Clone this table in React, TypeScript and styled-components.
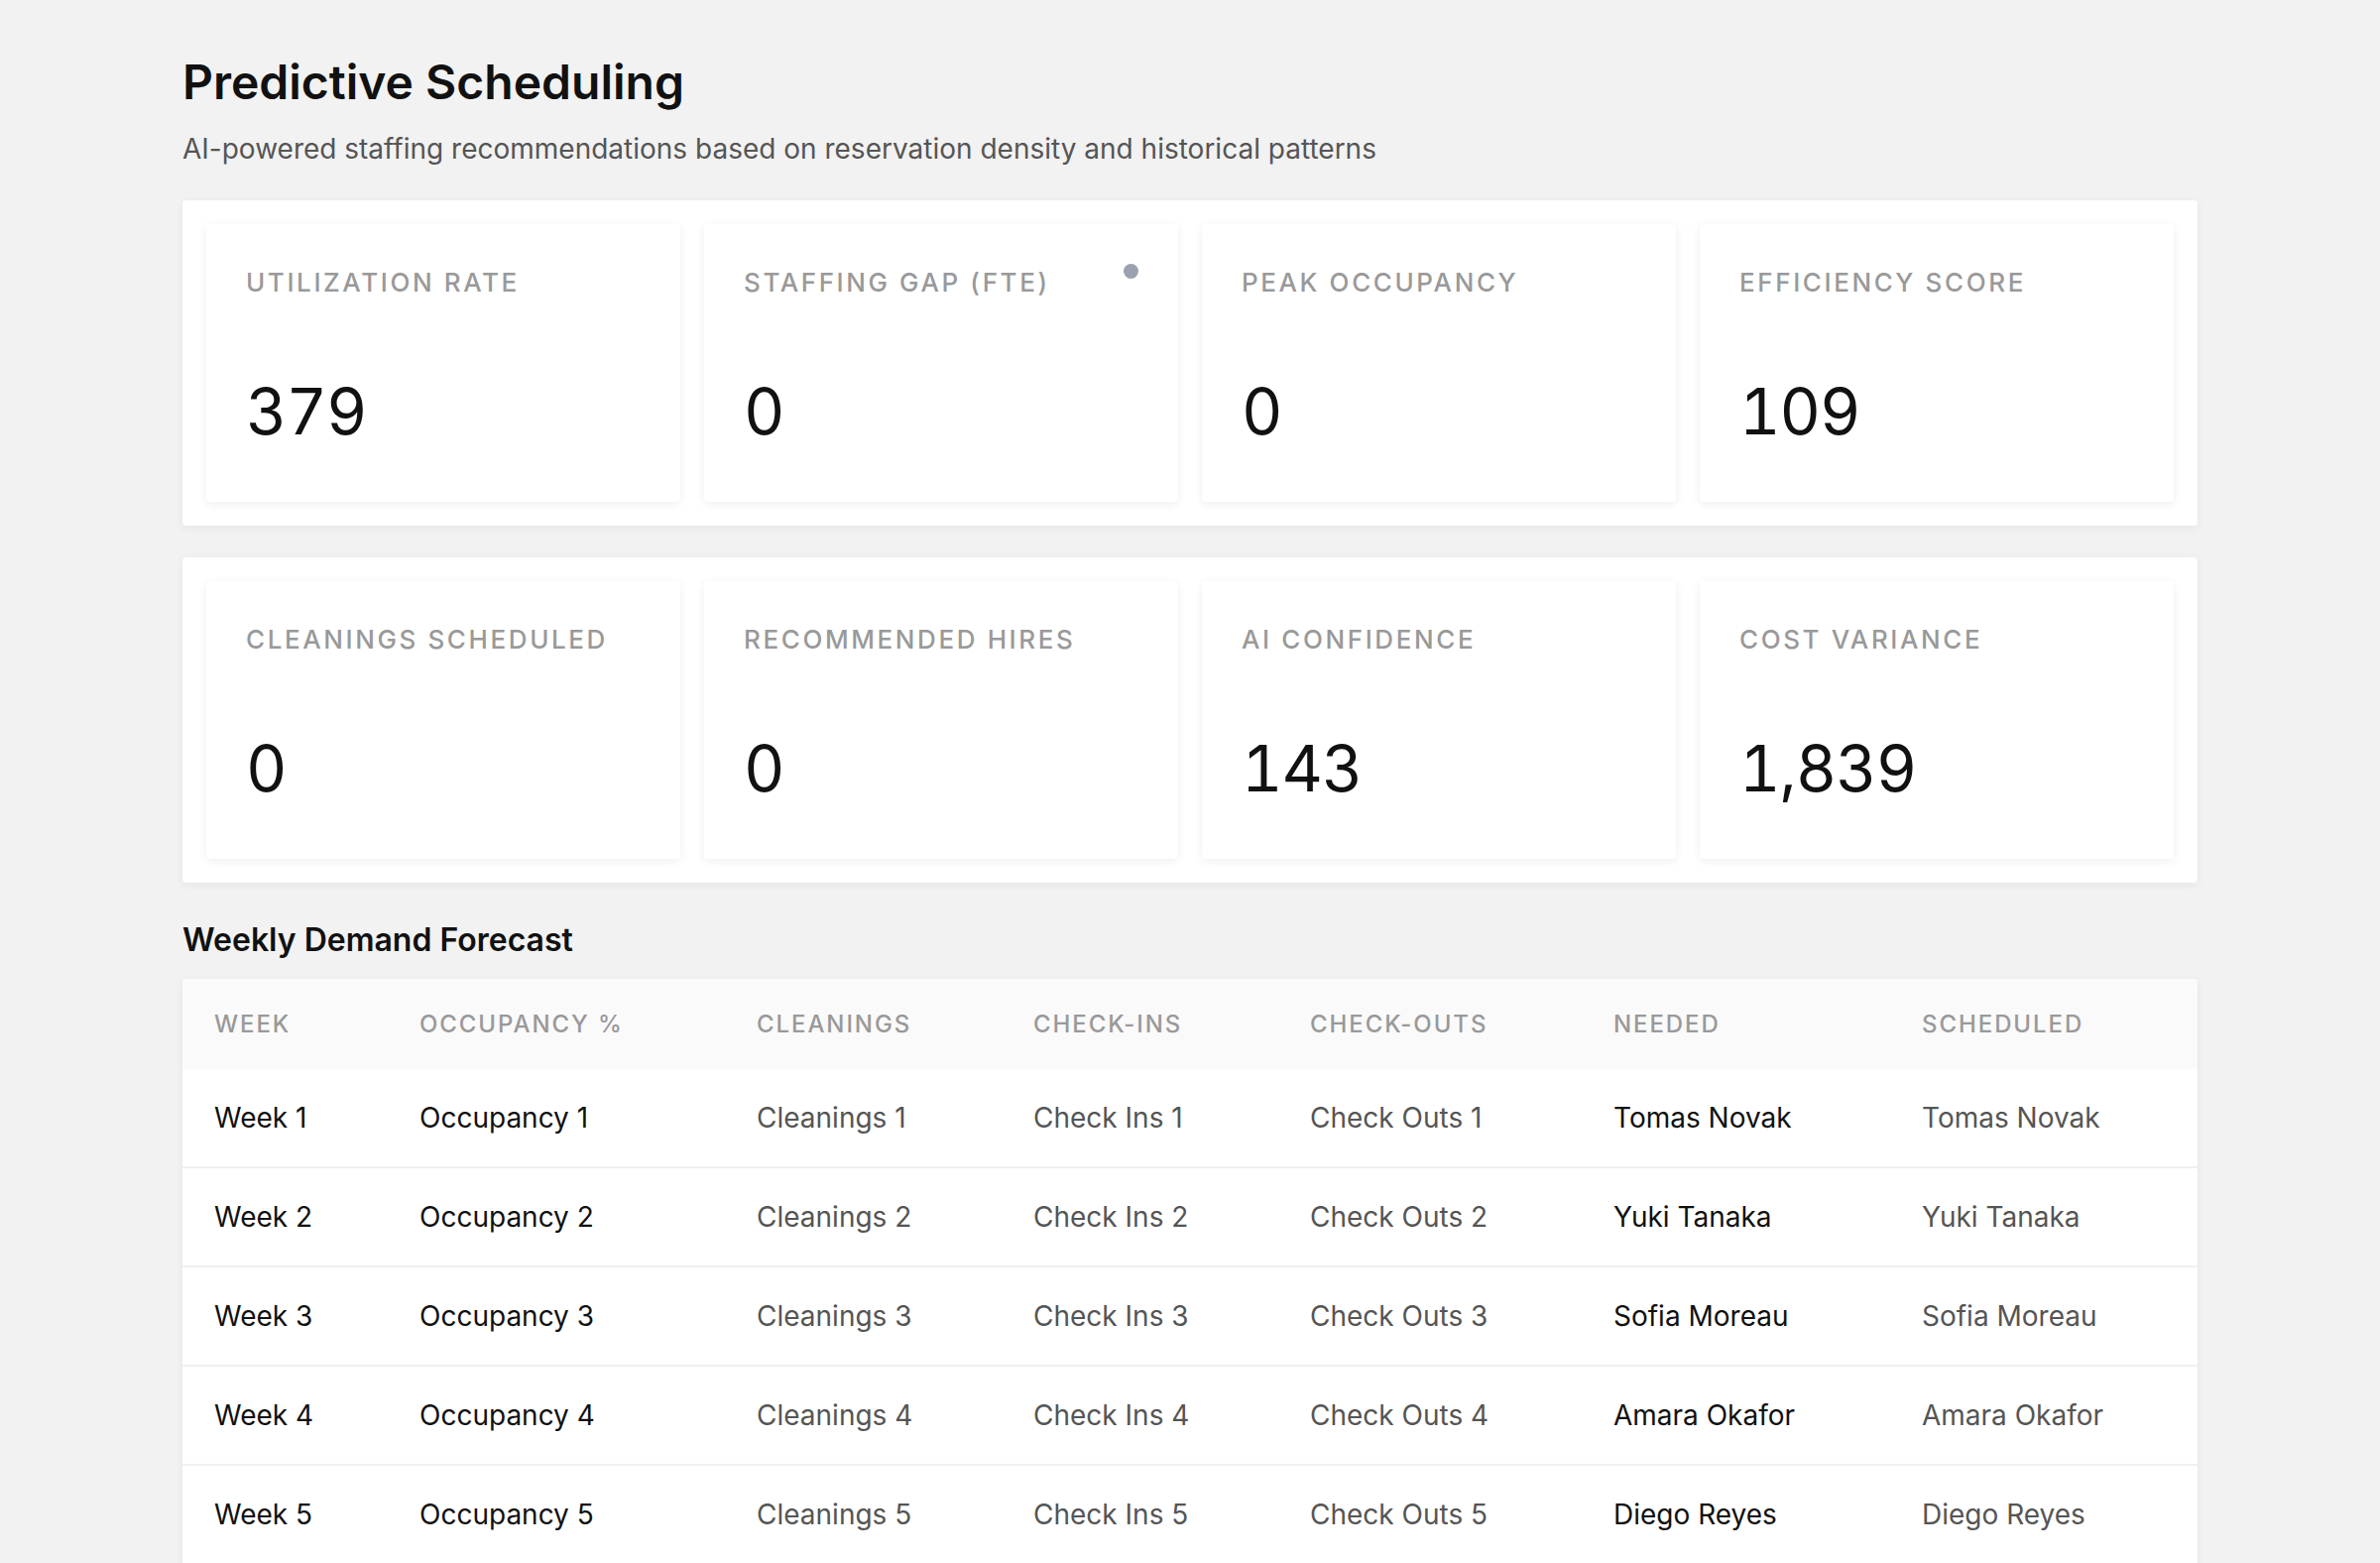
import styled, { createGlobalStyle } from 'styled-components';

interface Stat {
  label: string;
  value: string;
  dot?: boolean;
}

interface WeekRow {
  week: string;
  occupancy: string;
  cleanings: string;
  checkIns: string;
  checkOuts: string;
  needed: string;
  scheduled: string;
}

const primaryStats: Stat[] = [
  { label: 'Utilization Rate', value: '379' },
  { label: 'Staffing Gap (FTE)', value: '0', dot: true },
  { label: 'Peak Occupancy', value: '0' },
  { label: 'Efficiency Score', value: '109' },
];

const secondaryStats: Stat[] = [
  { label: 'Cleanings Scheduled', value: '0' },
  { label: 'Recommended Hires', value: '0' },
  { label: 'AI Confidence', value: '143' },
  { label: 'Cost Variance', value: '1,839' },
];

const staff = [
  'Tomas Novak',
  'Yuki Tanaka',
  'Sofia Moreau',
  'Amara Okafor',
  'Diego Reyes',
  'Lena Fischer',
  'Ravi Patel',
  'Marcus Chen',
];

const weeks: WeekRow[] = staff.map((name, i) => ({
  week: `Week ${i + 1}`,
  occupancy: `Occupancy ${i + 1}`,
  cleanings: `Cleanings ${i + 1}`,
  checkIns: `Check Ins ${i + 1}`,
  checkOuts: `Check Outs ${i + 1}`,
  needed: name,
  scheduled: name,
}));

const columns = [
  { title: 'Week', width: 207 },
  { title: 'Occupancy %', width: 340 },
  { title: 'Cleanings', width: 279 },
  { title: 'Check-Ins', width: 279 },
  { title: 'Check-Outs', width: 306 },
  { title: 'Needed', width: 311 },
  { title: 'Scheduled', width: 310 },
];

const GlobalStyle = createGlobalStyle`
  * {
    box-sizing: border-box;
  }

  body {
    margin: 0;
    background: #f2f2f2;
    font-family: Inter, 'Noto Sans', 'Liberation Sans', sans-serif;
    color: #111;
  }
`;

const Page = styled.main`
  max-width: 2032px;
  margin: 0 auto;
  padding: 54px 0 80px;
`;

const Title = styled.h1`
  margin: 0 0 17px;
  font-size: 48px;
  line-height: 1.2;
  font-weight: 600;
  color: #111;
`;

const Subtitle = styled.p`
  margin: 0 0 31px;
  font-size: 28px;
  line-height: 1.5;
  color: #555;
`;

const StatPanel = styled.section`
  display: grid;
  grid-template-columns: repeat(4, 1fr);
  gap: 24px;
  padding: 24px;
  margin-bottom: 32px;
  background: #fff;
  border-radius: 4px;
  box-shadow: 0 2px 8px rgba(0, 0, 0, 0.06);
`;

const StatCard = styled.div`
  position: relative;
  height: 280px;
  padding: 40px;
  background: #fff;
  border-radius: 4px;
  box-shadow: 0 2px 10px rgba(0, 0, 0, 0.07);
`;

const StatLabel = styled.div`
  font-size: 26px;
  line-height: 1.45;
  font-weight: 500;
  letter-spacing: 0.1em;
  text-transform: uppercase;
  color: #999;
`;

const StatValue = styled.div`
  margin-top: 80px;
  font-size: 64px;
  line-height: 1;
  font-weight: 400;
  letter-spacing: -0.015em;
  font-variant-numeric: tabular-nums;
  color: #111;
`;

const StatusDot = styled.span`
  position: absolute;
  top: 40px;
  right: 40px;
  width: 15px;
  height: 15px;
  border-radius: 50%;
  background: #9aa1b0;
`;

const SectionTitle = styled.h2`
  margin: 37px 0 19px;
  font-size: 32px;
  line-height: 1.3;
  font-weight: 600;
  color: #111;
`;

const TablePanel = styled.section`
  background: #fff;
  border-radius: 4px;
  overflow: hidden;
  box-shadow: 0 2px 8px rgba(0, 0, 0, 0.06);
`;

const Table = styled.table`
  width: 100%;
  table-layout: fixed;
  border-collapse: separate;
  border-spacing: 0;
`;

const HeadCell = styled.th<{ $width: number }>`
  width: ${(p) => p.$width}px;
  height: 91px;
  padding: 0 32px;
  background: #fafafa;
  text-align: left;
  font-size: 24px;
  font-weight: 500;
  letter-spacing: 0.08em;
  text-transform: uppercase;
  color: #999;
`;

const Cell = styled.td<{ $muted?: boolean }>`
  height: 100px;
  padding: 0 32px;
  border-bottom: 2px solid #f0f0f0;
  font-size: 28px;
  color: ${(p) => (p.$muted ? '#555' : '#111')};
  white-space: nowrap;
`;

const StatGrid = ({ stats }: { stats: Stat[] }) => (
  <StatPanel>
    {stats.map((s) => (
      <StatCard key={s.label}>
        {s.dot && <StatusDot />}
        <StatLabel>{s.label}</StatLabel>
        <StatValue>{s.value}</StatValue>
      </StatCard>
    ))}
  </StatPanel>
);

export default function App() {
  return (
    <>
      <GlobalStyle />
      <Page>
        <Title>Predictive Scheduling</Title>
        <Subtitle>
          AI-powered staffing recommendations based on reservation density and historical patterns
        </Subtitle>

        <StatGrid stats={primaryStats} />
        <StatGrid stats={secondaryStats} />

        <SectionTitle>Weekly Demand Forecast</SectionTitle>
        <TablePanel>
          <Table>
            <thead>
              <tr>
                {columns.map((c) => (
                  <HeadCell key={c.title} $width={c.width}>
                    {c.title}
                  </HeadCell>
                ))}
              </tr>
            </thead>
            <tbody>
              {weeks.map((w) => (
                <tr key={w.week}>
                  <Cell>{w.week}</Cell>
                  <Cell>{w.occupancy}</Cell>
                  <Cell $muted>{w.cleanings}</Cell>
                  <Cell $muted>{w.checkIns}</Cell>
                  <Cell $muted>{w.checkOuts}</Cell>
                  <Cell>{w.needed}</Cell>
                  <Cell $muted>{w.scheduled}</Cell>
                </tr>
              ))}
            </tbody>
          </Table>
        </TablePanel>
      </Page>
    </>
  );
}
